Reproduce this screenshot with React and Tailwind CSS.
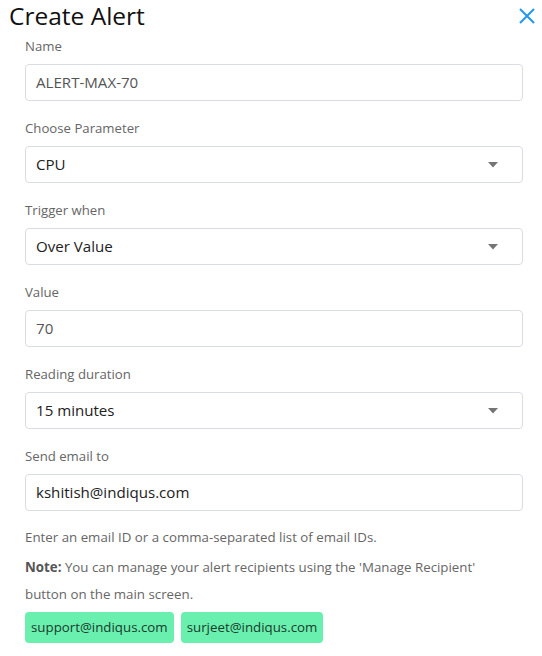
import React from "react";

const Caret = () => (
  <svg width="10" height="6" viewBox="0 0 10 6" className="absolute right-[24px] top-1/2 -translate-y-1/2">
    <path d="M0 0h10L5 5.5z" fill="#757575" />
  </svg>
);

const Field = ({ label, value, select, muted }) => (
  <div className="flex flex-col">
    <label className="text-[13.2px] leading-[20px] text-[#666] mb-[8px]">{label}</label>
    <div className="relative h-[37px] border border-[#d9dde3] rounded-[4px] bg-white flex items-center pl-[10px]">
      <span className={"text-[15.1px] " + (muted ? "text-[#555]" : "text-[#212121]")}>{value}</span>
      {select && <Caret />}
    </div>
  </div>
);

export default function App() {
  return (
    <div className="w-[542px] h-[656px] bg-white overflow-hidden" style={{ fontFamily: '"Open Sans", sans-serif' }}>
      <div className="flex items-center justify-between pl-[9px] pr-[7px] h-[31px]">
        <h1 className="text-[24.5px] text-[#111] leading-[31px]">Create Alert</h1>
        <svg width="16" height="16" viewBox="0 0 16 16">
          <path d="M1 1l14 14M15 1L1 15" stroke="#2196f3" strokeWidth="2" />
        </svg>
      </div>
      <div className="pl-[25px] pr-[19px] flex flex-col gap-[17px] pt-[5px]">
        <Field label="Name" value="ALERT-MAX-70" muted />
        <Field label="Choose Parameter" value="CPU" select />
        <Field label="Trigger when" value="Over Value" select />
        <Field label="Value" value="70" muted />
        <Field label="Reading duration" value="15 minutes" select />
        <Field label="Send email to" value="kshitish@indiqus.com" />
      </div>
      <div className="pl-[25px] pr-[19px] pt-[16px] text-[13.3px] text-[#666]">
        <p className="leading-[20px]">Enter an email ID or a comma-separated list of email IDs.</p>
        <p className="leading-[27px] mt-[7px] max-w-[475px]">
          <span className="font-bold text-[#555]">Note:</span> You can manage your alert recipients using the 'Manage Recipient' button on the main screen.
        </p>
        <div className="flex gap-[7px] mt-[4px]">
          <span className="bg-[#69f0ae] text-[#1b3a2c] rounded-[4px] h-[31px] px-[6px] flex items-center">support@indiqus.com</span>
          <span className="bg-[#69f0ae] text-[#1b3a2c] rounded-[4px] h-[31px] px-[6px] flex items-center">surjeet@indiqus.com</span>
        </div>
      </div>
    </div>
  );
}
